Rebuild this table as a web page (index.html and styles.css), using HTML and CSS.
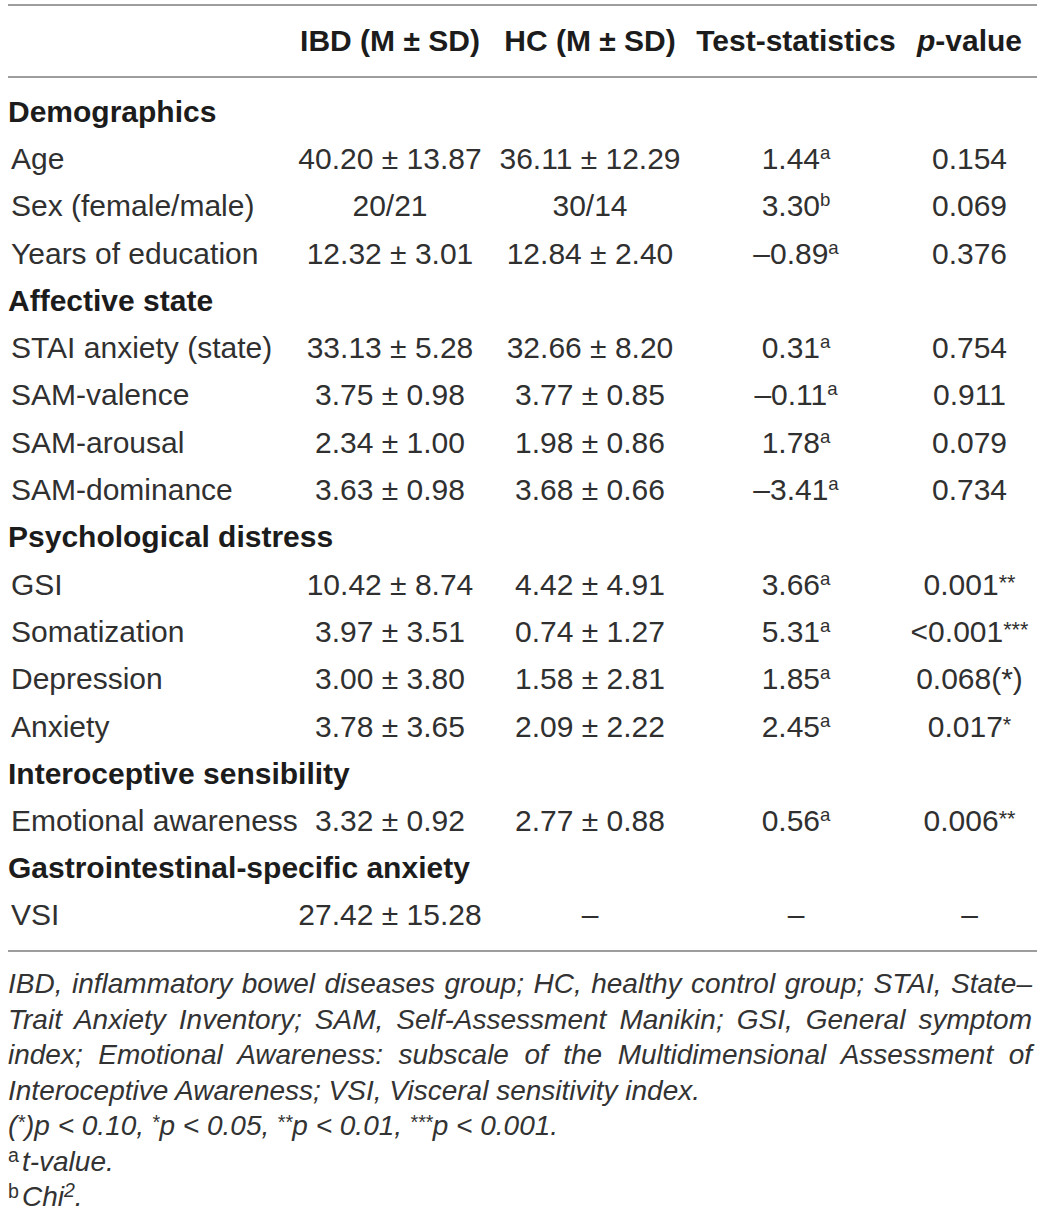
FILE: index.html
```html
<!DOCTYPE html>
<html>
<head>
    <title>IBD vs HC - sample characteristics</title>
    <link rel="stylesheet" href="styles.css">
</head>
<body>
    <div class="page">
        <table class="stats">
            <colgroup>
                <col class="col-label">
                <col class="col-ibd">
                <col class="col-hc">
                <col class="col-test">
                <col class="col-p">
            </colgroup>
            <thead>
                <tr>
                    <th></th>
                    <th>IBD (M &plusmn; SD)</th>
                    <th>HC (M &plusmn; SD)</th>
                    <th>Test-statistics</th>
                    <th><i>p</i>-value</th>
                </tr>
            </thead>
            <tbody>
                <tr class="group first"><td colspan="5">Demographics</td></tr>
                <tr><td>Age</td><td>40.20 &plusmn; 13.87</td><td>36.11 &plusmn; 12.29</td><td>1.44<sup>a</sup></td><td>0.154</td></tr>
                <tr><td>Sex (female/male)</td><td>20/21</td><td>30/14</td><td>3.30<sup>b</sup></td><td>0.069</td></tr>
                <tr><td>Years of education</td><td>12.32 &plusmn; 3.01</td><td>12.84 &plusmn; 2.40</td><td>&ndash;0.89<sup>a</sup></td><td>0.376</td></tr>

                <tr class="group"><td colspan="5">Affective state</td></tr>
                <tr><td>STAI anxiety (state)</td><td>33.13 &plusmn; 5.28</td><td>32.66 &plusmn; 8.20</td><td>0.31<sup>a</sup></td><td>0.754</td></tr>
                <tr><td>SAM-valence</td><td>3.75 &plusmn; 0.98</td><td>3.77 &plusmn; 0.85</td><td>&ndash;0.11<sup>a</sup></td><td>0.911</td></tr>
                <tr><td>SAM-arousal</td><td>2.34 &plusmn; 1.00</td><td>1.98 &plusmn; 0.86</td><td>1.78<sup>a</sup></td><td>0.079</td></tr>
                <tr><td>SAM-dominance</td><td>3.63 &plusmn; 0.98</td><td>3.68 &plusmn; 0.66</td><td>&ndash;3.41<sup>a</sup></td><td>0.734</td></tr>

                <tr class="group"><td colspan="5">Psychological distress</td></tr>
                <tr><td>GSI</td><td>10.42 &plusmn; 8.74</td><td>4.42 &plusmn; 4.91</td><td>3.66<sup>a</sup></td><td>0.001<span class="sig">**</span></td></tr>
                <tr><td>Somatization</td><td>3.97 &plusmn; 3.51</td><td>0.74 &plusmn; 1.27</td><td>5.31<sup>a</sup></td><td>&lt;0.001<span class="sig">***</span></td></tr>
                <tr><td>Depression</td><td>3.00 &plusmn; 3.80</td><td>1.58 &plusmn; 2.81</td><td>1.85<sup>a</sup></td><td>0.068(*)</td></tr>
                <tr><td>Anxiety</td><td>3.78 &plusmn; 3.65</td><td>2.09 &plusmn; 2.22</td><td>2.45<sup>a</sup></td><td>0.017<span class="sig">*</span></td></tr>

                <tr class="group"><td colspan="5">Interoceptive sensibility</td></tr>
                <tr><td>Emotional awareness</td><td>3.32 &plusmn; 0.92</td><td>2.77 &plusmn; 0.88</td><td>0.56<sup>a</sup></td><td>0.006<span class="sig">**</span></td></tr>

                <tr class="group"><td colspan="5">Gastrointestinal-specific anxiety</td></tr>
                <tr class="last"><td>VSI</td><td>27.42 &plusmn; 15.28</td><td>&ndash;</td><td>&ndash;</td><td>&ndash;</td></tr>
            </tbody>
        </table>

        <div class="notes">
            <p class="legend">IBD, inflammatory bowel diseases group; HC, healthy control group; STAI, State&ndash;Trait Anxiety Inventory; SAM, Self-Assessment Manikin; GSI, General symptom index; Emotional Awareness: subscale of the Multidimensional Assessment of Interoceptive Awareness; VSI, Visceral sensitivity index.</p>
            <p>(<span class="star">*</span>)p &lt; 0.10, <span class="star">*</span>p &lt; 0.05, <span class="star">**</span>p &lt; 0.01, <span class="star">***</span>p &lt; 0.001.</p>
            <p><sup class="mark">a</sup>t-value.</p>
            <p><sup class="mark">b</sup>Chi<sup>2</sup>.</p>
        </div>
    </div>
</body>
</html>
```

FILE: styles.css
```css
body {
    margin: 0;
    padding: 0;
    background: #fff;
    font-family: "Liberation Sans", Arial, sans-serif;
    color: #303030;
}

.page {
    padding: 4px 10px 0 8px;
}

.stats {
    width: 100%;
    border-collapse: collapse;
    table-layout: fixed;
    font-size: 30px;
}

.col-label { width: 282px; }
.col-ibd { width: 200px; }
.col-hc { width: 200px; }
.col-test { width: 212px; }

.stats thead th {
    height: 70px;
    padding: 0;
    font-weight: bold;
    color: #1c1c1c;
    text-align: center;
    border-top: 2px solid #9d9d9d;
    border-bottom: 2px solid #9d9d9d;
    white-space: nowrap;
}

.stats td {
    height: 47.3px;
    padding: 0;
    text-align: center;
    white-space: nowrap;
    box-sizing: border-box;
}

.stats td:first-child {
    text-align: left;
    padding-left: 3px;
}

.stats tr.group td {
    font-weight: bold;
    color: #1c1c1c;
    padding-left: 0;
}

.stats tr.first td {
    height: 58.3px;
    padding-top: 11px;
}

.stats tr.last td {
    height: 59.3px;
    padding-bottom: 12px;
    border-bottom: 2px solid #9d9d9d;
}

.stats sup {
    font-size: 0.62em;
    vertical-align: 0.55em;
    line-height: 0;
}

.sig {
    font-size: 0.72em;
    vertical-align: 0.25em;
    line-height: 0;
}

.notes {
    margin-top: 14px;
    font-size: 28px;
    line-height: 35.5px;
    font-style: italic;
    color: #333;
    padding-right: 5px;
}

.notes p {
    margin: 0;
}

.notes .legend {
    text-align: justify;
}

.star {
    font-size: 0.7em;
    vertical-align: 0.3em;
    line-height: 0;
}

.notes sup {
    font-size: 0.7em;
    vertical-align: 0.45em;
    line-height: 0;
}

.notes sup.mark {
    font-style: normal;
    margin-right: 3px;
}
```
